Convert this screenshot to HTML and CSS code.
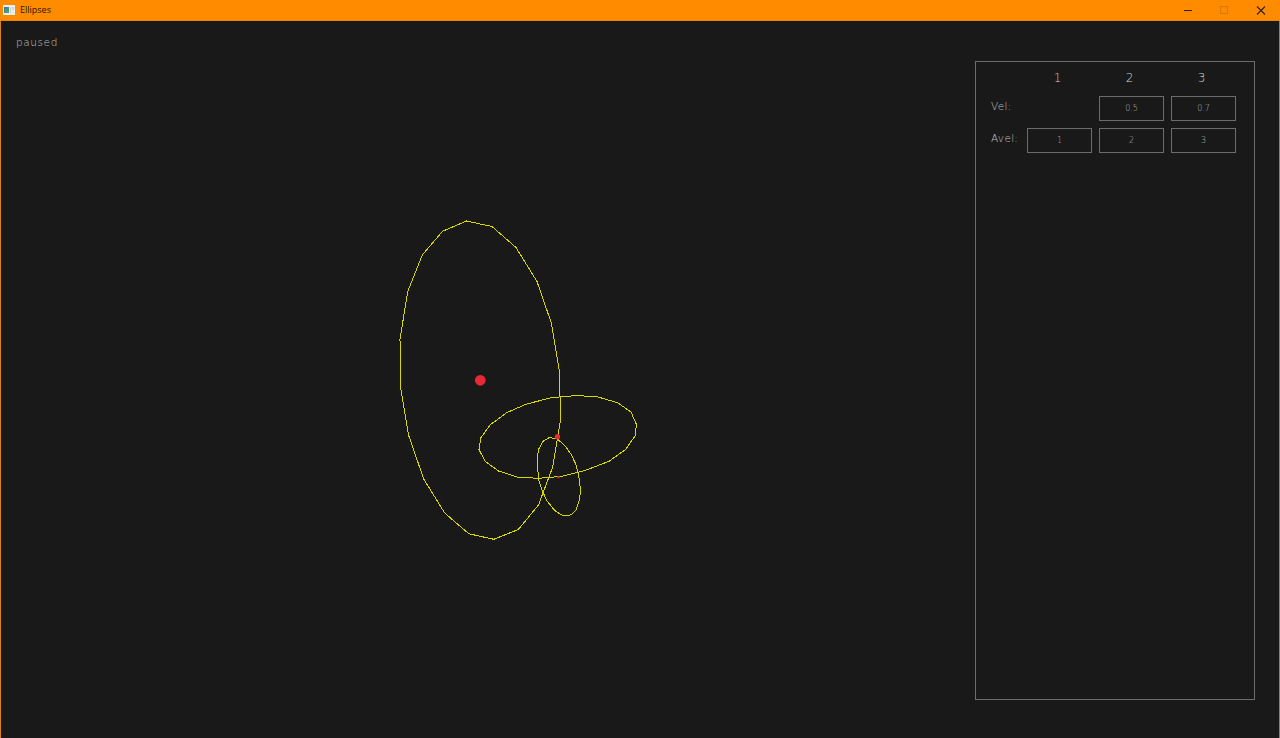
FILE: index.html
```html
<!DOCTYPE html>
<html lang="en">
<head>
<meta charset="utf-8">
<title>Ellipses</title>
<link rel="stylesheet" href="styles.css">
</head>
<body>
<div class="window">
  <header class="titlebar">
    <svg class="app-icon" width="12" height="10" viewBox="0 0 12 10">
      <defs><linearGradient id="g" x2="0.6" y2="1"><stop offset="0" stop-color="#4773a5"/><stop offset="1" stop-color="#43a879"/></linearGradient></defs>
      <rect width="12" height="10" fill="#e9eee9"/>
      <rect x="1" y="2" width="5" height="6" fill="url(#g)"/>
      <rect x="7" y="2" width="1" height="6" fill="#c8d0d0"/>
      <rect x="9" y="2" width="2" height="3" fill="#cbd5df"/>
    </svg>
    <span class="title">Ellipses</span>
    <svg class="controls" width="96" height="20" viewBox="0 0 96 20">
      <path d="M4 10.5h8" stroke="#33200a"/>
      <rect x="40.5" y="6.500" width="7" height="7" fill="none" stroke="#d87a08"/>
      <path d="M77 6.500l8 8M85 6.500l-8 8" stroke="#33200a" stroke-width="1.1"/>
    </svg>
  </header>
  <main class="client">
    <section class="stage">
      <div class="status">paused</div>
      <svg class="plot" width="974" height="717" viewBox="1 21 974 717">
        <g class="orbits">
          <polygon points="466.5,221 492,226.500 516,247.500 537,281.500 551.500,323.500 559.500,372 560.500,420 552.700,467 538.500,505 518.300,529.500 493.800,539.300 468.700,533.700 444.700,513 423.700,479 408.500,435 400.700,388 400,339 407.700,291.700 422.300,255 442.500,231.300"/>
          <polygon points="576.500,395.500 598,397 617.500,402.700 631,412 636.500,424.700 635,436 625.500,449.500 609,461.300 585,470.500 562,476.300 539,478.300 518,477.300 498.500,471 485,461.200 479,449.500 480.700,438 490,425 506.500,412.700 526.700,404 551.500,397.700"/>
          <polygon points="549.500,437.500 557.300,439 564.300,445 571,454 575.700,464 578.700,475 580.500,490 579.500,500 576.200,509.500 571.500,514.500 566,516 560.700,514.700 554.300,510 547.300,501.300 543,492.500 538.900,481 537.700,468.300 537,460 538.700,449 543.300,441"/>
        </g>
        <g class="bodies">
          <circle cx="480.300" cy="380.300" r="5.400"/>
          <circle cx="557.500" cy="436.800" r="2.700"/>
          <circle cx="558.500" cy="477" r="1.300"/>
        </g>
      </svg>
    </section>
    <aside class="panel">
      <div class="grid heads"><span></span><b>1</b><b>2</b><b>3</b></div>
      <div class="grid"><label>Vel:</label><span></span><div class="field">0.5</div><div class="field">0.7</div></div>
      <div class="grid"><label>Avel:</label><div class="field">1</div><div class="field">2</div><div class="field">3</div></div>
    </aside>
  </main>
</div>
</body>
</html>
```
FILE: styles.css
```css
* { box-sizing: border-box; }
body { margin: 0; overflow: hidden; background: #191919; }
.window {
  width: 1280px; height: 738px;
  display: flex; flex-direction: column;
  border-left: 1px solid #d98216;
  border-right: 1px solid #b97720;
  background: #191919;
}
.titlebar {
  height: 21px; flex: none;
  display: flex; align-items: center;
  margin: 0 -1px; padding: 0 4px 1px 3px;
  background: #ff8c00;
  border-bottom: 1px solid #ed8405;
}
.app-icon { margin-right: 5px; }
.title { font: 9px/18px "Open Sans", "Noto Sans", sans-serif; color: #241400; letter-spacing: 0; }
.controls { margin-left: auto; }
.client {
  flex: 1; display: flex;
  color: #c4c4c4;
}
.stage { width: 974px; flex: none; display: grid; }
.stage > * { grid-area: 1 / 1; }
.status { padding: 15px; font: 200 10.500px/13px "DejaVu Sans", sans-serif; letter-spacing: .6px; }
.plot { display: block; }
.orbits polygon { fill: none; stroke: #d7d700; stroke-width: 1; shape-rendering: crispEdges; }
.bodies circle { fill: #e62937; }
.panel {
  width: 280px; height: 639px; margin-top: 40px;
  padding: 9px 18px 0 15px;
  border: 1px solid #6c6c6c;
}
.grid {
  display: grid; grid-template-columns: 29px 65px 65px 65px; column-gap: 7px;
  height: 25px; margin-bottom: 7px;
}
.heads { height: 14px; margin-bottom: 11px; }
.heads b { font: 200 12px/14px "DejaVu Sans", sans-serif; text-align: center; padding-right: 4px; color: #d0d0d0; }
.grid label { font: 200 10.500px/21px "DejaVu Sans", sans-serif; white-space: nowrap; letter-spacing: .3px; }
.field {
  border: 1px solid #6c6c6c;
  font: 200 8px/23px "DejaVu Sans", sans-serif;
  text-align: center; color: #b0b0b0;
}
```
